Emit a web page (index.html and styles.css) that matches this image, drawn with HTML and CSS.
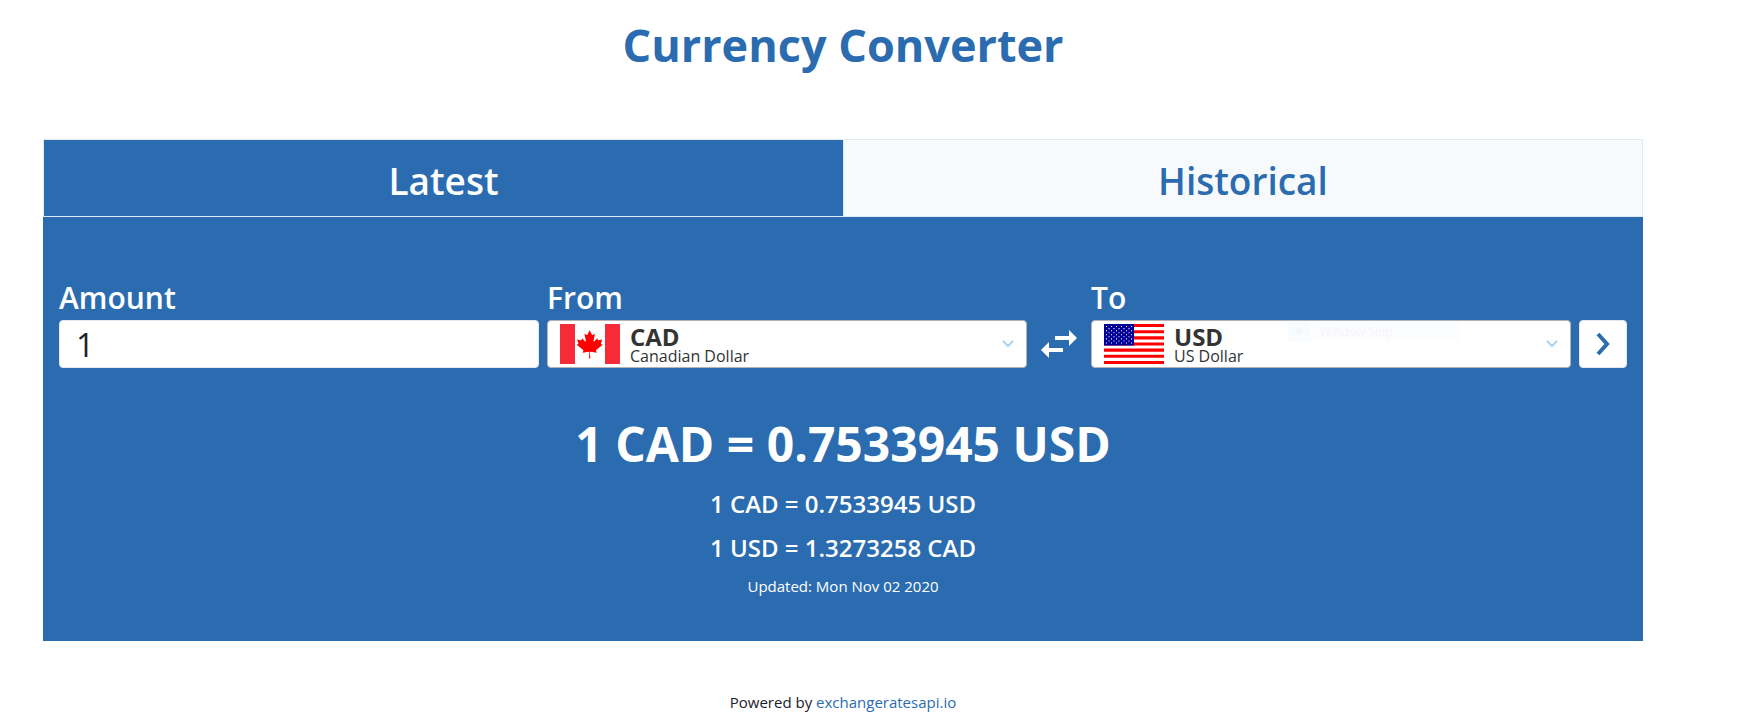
FILE: index.html
```html
<!DOCTYPE html>
<html lang="en">
<head>
<meta charset="utf-8">
<meta name="viewport" content="width=device-width, initial-scale=1">
<title>Currency Converter</title>
<link rel="stylesheet" href="styles.css">
</head>
<body>
<main class="page">
  <h1 class="title">Currency Converter</h1>
  <nav class="tabs">
    <button class="tab tab-active" type="button">Latest</button>
    <button class="tab" type="button">Historical</button>
  </nav>
  <section class="panel">
    <form class="form">
      <label class="label label-amount" for="amount">Amount</label>
      <label class="label label-from" for="from">From</label>
      <label class="label label-to" for="to">To</label>
      <input class="amount" id="amount" type="text" inputmode="decimal" value="1">
      <div class="picker">
        <svg class="flag" viewBox="0 0 60 40" aria-hidden="true">
          <rect width="60" height="40" fill="#fff"/>
          <path fill="#f72a37" d="M0 0h15v40H0zM45 0h15v40H45z"/>
          <path fill="#f00" transform="translate(-3.6 3.4) scale(.007)" d="m4845 4430-45-863a95 95 0 0 1 111-98l859 151-116-320a65 65 0 0 1 20-73l941-762-212-99a65 65 0 0 1-34-79l186-572-542 115a65 65 0 0 1-73-38l-105-247-423 454a65 65 0 0 1-111-57l204-1052-327 189a65 65 0 0 1-91-27l-332-652-332 652a65 65 0 0 1-91 27l-327-189 204 1052a65 65 0 0 1-111 57l-423-454-105 247a65 65 0 0 1-73 38l-542-115 186 572a65 65 0 0 1-34 79l-212 99 941 762a65 65 0 0 1 20 73l-116 320 859-151a95 95 0 0 1 111 98l-45 863z"/>
        </svg>
        <span class="currency"><span class="code">CAD</span><span class="name">Canadian Dollar</span></span>
        <svg class="chevron" viewBox="0 0 12 8" aria-hidden="true"><path d="M1 1l5 5 5-5"/></svg>
        <select class="native" id="from"><option>CAD</option><option>USD</option></select>
      </div>
      <button class="swap" type="button" aria-label="Swap currencies">
        <svg viewBox="0 0 36 28" aria-hidden="true"><path fill="#fff" d="M14 6h14V0l8 8-8 8v-6H14zM22 18H8v-6l-8 8 8 8v-6h14z"/></svg>
      </button>
      <div class="picker">
        <svg class="flag" viewBox="0 0 60 39" preserveAspectRatio="none" aria-hidden="true">
          <rect width="60" height="39" fill="#fff"/>
          <path stroke="#f00" stroke-width="3" d="M0 1.5h60m-60 6h60m-60 6h60m-60 6h60m-60 6h60m-60 6h60m-60 6h60"/>
          <rect width="30" height="21" fill="#009"/>
          <path class="stars" d="M2 2.500h27M4.500 4.500h22M2 6.500h27M4.500 8.500h22M2 10.500h27M4.500 12.500h22M2 14.500h27M4.500 16.500h22M2 18.500h27"/>
        </svg>
        <span class="currency"><span class="code">USD</span><span class="name">US Dollar</span></span>
        <svg class="chevron" viewBox="0 0 12 8" aria-hidden="true"><path d="M1 1l5 5 5-5"/></svg>
        <span class="ghost" aria-hidden="true"><span class="ghost-icon"></span>Window Snip</span>
        <select class="native" id="to"><option>USD</option><option>CAD</option></select>
      </div>
      <button class="go" type="submit" aria-label="Convert">
        <svg viewBox="0 0 14 24" aria-hidden="true"><path d="M2 2l9 10-9 10"/></svg>
      </button>
    </form>
    <div class="results">
      <p class="total">1 CAD = 0.7533945 USD</p>
      <p class="rate">1 CAD = 0.7533945 USD</p>
      <p class="rate">1 USD = 1.3273258 CAD</p>
      <p class="updated">Updated: Mon Nov 02 2020</p>
    </div>
  </section>
  <footer class="footer">Powered by <a class="link" href="https://exchangeratesapi.io">exchangeratesapi.io</a></footer>
</main>
</body>
</html>
```
FILE: styles.css
```css
* { box-sizing: border-box; margin: 0; }
body {
  padding-right: 71px;
  background: #fff;
  color: #1a202c;
  font: 400 15px/24px "Open Sans", "Noto Sans", sans-serif;
}
button, input { font: inherit; border: 0; padding: 0; }
button { background: none; cursor: pointer; }
.page { max-width: 1600px; margin: 0 auto; }
.title {
  padding: 9px 0 58px;
  color: #2b6cb0;
  font-size: 45px;
  line-height: 72px;
  font-weight: 700;
  text-align: center;
}
.tabs { display: grid; grid-template-columns: 1fr 1fr; border: 1px solid #e2e8f0; }
.tab {
  padding: 11px 8px 5px;
  background: #f7fafc;
  color: #2b6cb0;
  font-size: 37px;
  line-height: 60px;
  font-weight: 600;
}
.tab + .tab { border-left: 1px solid #e2e8f0; }
.tab-active { background: #2b6cb0; color: #fff; }
.panel { padding: 58px 16px 39px; background: #2b6cb0; color: #fff; }
.form {
  display: grid;
  grid-template-columns: 1fr 1fr 48px 1fr 48px;
  grid-template-rows: auto 48px;
  column-gap: 8px;
}
.label { font-size: 30px; line-height: 45px; font-weight: 600; }
.label-from { grid-column: 2; }
.label-to { grid-column: 4 / 6; }
.amount, .picker, .go { border: 1px solid #e2e8f0; border-radius: 4px; background: #fff; }
.amount { width: 100%; min-width: 0; grid-column: 1; padding: 0 16px; color: #1a202c; font-size: 32px; }
.picker {
  position: relative;
  display: flex;
  align-items: center;
  gap: 10px;
  min-width: 0;
  padding: 0 12px;
  border-color: #b3b3b3;
  color: #333;
}
.flag { flex: none; width: 60px; height: 40px; }
.currency { flex: 1; display: flex; flex-direction: column; }
.code { font-size: 24px; line-height: 24px; font-weight: 700; }
.name { font-size: 16px; line-height: 14px; }
.chevron { width: 12px; height: 8px; fill: none; stroke: #a3d3f5; stroke-width: 2; }
.native { position: absolute; inset: 0; width: 100%; height: 100%; opacity: 0; cursor: pointer; }
.ghost {
  position: absolute;
  top: 0;
  left: 41%;
  display: flex;
  align-items: center;
  gap: 10px;
  width: 173px;
  height: 21px;
  background: #fcfdff;
  color: #f5f5f6;
  font-size: 12px;
}
.ghost-icon { width: 22px; height: 21px; background: radial-gradient(circle, #f5f5f6 3px, #f8fcff 4px); }
.stars { stroke: #fff; stroke-width: 1; stroke-dasharray: 1 4; }
.swap, .go { display: flex; align-items: center; justify-content: center; }
.swap svg { width: 36px; height: 28px; }
.go svg { width: 14px; height: 24px; fill: none; stroke: #2b6cb0; stroke-width: 4; }
.results { padding-top: 40px; text-align: center; }
.total { padding-bottom: 2px; font-size: 48px; line-height: 72px; font-weight: 700; }
.rate { padding: 4px 0; font-size: 24px; line-height: 36px; font-weight: 600; }
.updated { padding: 4px 0; line-height: 24px; }
.footer { padding-top: 49px; text-align: center; }
.link { color: #2b6cb0; text-decoration: none; }
```
